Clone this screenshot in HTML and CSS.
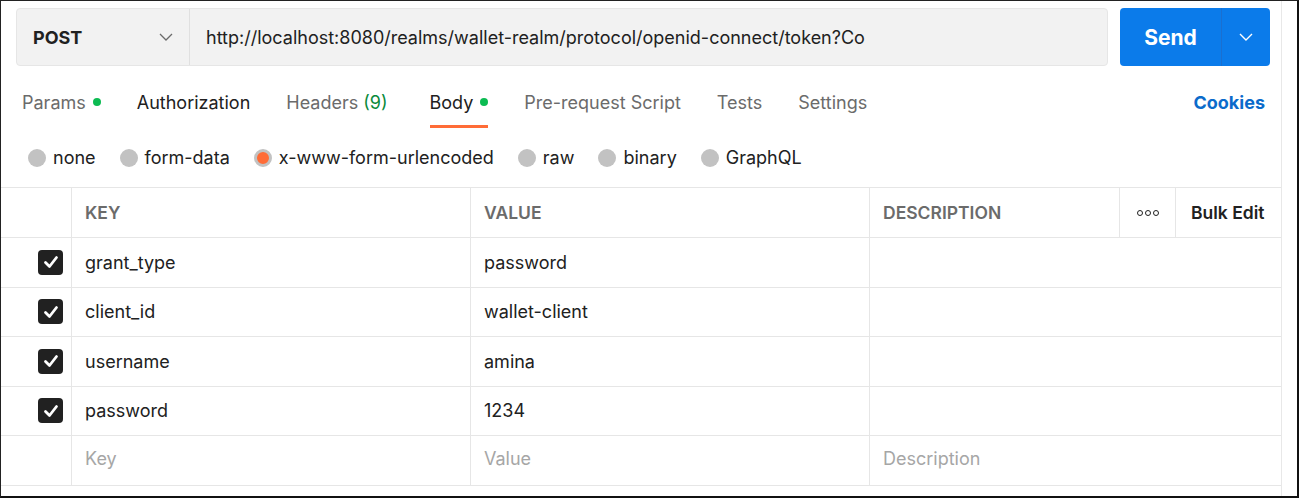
FILE: index.html
```html
<!DOCTYPE html>
<html>
<head>
<meta charset="utf-8">
<link rel="stylesheet" href="styles.css">
</head>
<body>
<div class="frame">
  <div class="main">
    <div class="topbar">
      <div class="urlbox">
        <div class="method">
          <span>POST</span>
          <svg class="chev" width="14" height="8" viewBox="0 0 14 8"><path d="M1 1l6 6 6-6" fill="none" stroke="#6b6b6b" stroke-width="1.3"/></svg>
        </div>
        <div class="url">http://localhost:8080/realms/wallet-realm/protocol/openid-connect/token?Co</div>
      </div>
      <div class="send">
        <div class="send-label">Send</div>
        <div class="send-drop">
          <svg width="14" height="8" viewBox="0 0 14 8"><path d="M1 1l6 6 6-6" fill="none" stroke="#fff" stroke-width="1.4"/></svg>
        </div>
      </div>
    </div>

    <div class="tabs">
      <div class="tab">Params <span class="dot"></span></div>
      <div class="tab dark">Authorization</div>
      <div class="tab">Headers <span class="count">(9)</span></div>
      <div class="tab active">Body <span class="dot"></span></div>
      <div class="tab">Pre-request Script</div>
      <div class="tab">Tests</div>
      <div class="tab">Settings</div>
      <div class="spacer"></div>
      <div class="cookies">Cookies</div>
    </div>

    <div class="radios">
      <div class="radio"><span class="circle"></span>none</div>
      <div class="radio"><span class="circle"></span>form-data</div>
      <div class="radio"><span class="circle on"></span>x-www-form-urlencoded</div>
      <div class="radio"><span class="circle"></span>raw</div>
      <div class="radio"><span class="circle"></span>binary</div>
      <div class="radio"><span class="circle"></span>GraphQL</div>
    </div>

    <div class="table">
      <div class="row head">
        <div class="c chk"></div>
        <div class="c key">KEY</div>
        <div class="c val">VALUE</div>
        <div class="c desc">DESCRIPTION</div>
        <div class="c more"><span class="o"></span><span class="o"></span><span class="o"></span></div>
        <div class="c bulk">Bulk Edit</div>
      </div>
      <div class="row">
        <div class="c chk"><span class="box"><svg width="16" height="14" viewBox="0 0 16 14"><path d="M2.5 7.5l4 4 7-9" fill="none" stroke="#fff" stroke-width="2.8" stroke-linecap="round" stroke-linejoin="round"/></svg></span></div>
        <div class="c key">grant_type</div>
        <div class="c val">password</div>
        <div class="c desc wide"></div>
      </div>
      <div class="row">
        <div class="c chk"><span class="box"><svg width="16" height="14" viewBox="0 0 16 14"><path d="M2.5 7.5l4 4 7-9" fill="none" stroke="#fff" stroke-width="2.8" stroke-linecap="round" stroke-linejoin="round"/></svg></span></div>
        <div class="c key">client_id</div>
        <div class="c val">wallet-client</div>
        <div class="c desc wide"></div>
      </div>
      <div class="row">
        <div class="c chk"><span class="box"><svg width="16" height="14" viewBox="0 0 16 14"><path d="M2.5 7.5l4 4 7-9" fill="none" stroke="#fff" stroke-width="2.8" stroke-linecap="round" stroke-linejoin="round"/></svg></span></div>
        <div class="c key">username</div>
        <div class="c val">amina</div>
        <div class="c desc wide"></div>
      </div>
      <div class="row">
        <div class="c chk"><span class="box"><svg width="16" height="14" viewBox="0 0 16 14"><path d="M2.5 7.5l4 4 7-9" fill="none" stroke="#fff" stroke-width="2.8" stroke-linecap="round" stroke-linejoin="round"/></svg></span></div>
        <div class="c key">password</div>
        <div class="c val">1234</div>
        <div class="c desc wide"></div>
      </div>
      <div class="row placeholder">
        <div class="c chk"></div>
        <div class="c key">Key</div>
        <div class="c val">Value</div>
        <div class="c desc wide">Description</div>
      </div>
    </div>
  </div>
  <div class="side"></div>
</div>
</body>
</html>
```

FILE: styles.css
```css
* { box-sizing: border-box; }
html, body { margin: 0; padding: 0; background: #fff; }
body { font-family: Inter, "Noto Sans", sans-serif; color: #212121; }

.frame {
  width: 1299px;
  height: 498px;
  border-top: 1px solid #222;
  border-left: 1px solid #222;
  border-right: 2px solid #111;
  border-bottom: 2px solid #111;
  display: flex;
  overflow: hidden;
}

.main {
  width: 1281px;
  border-right: 1px solid #e8e8e8;
  display: flex;
  flex-direction: column;
}
.side { flex: 1; }

.topbar {
  display: flex;
  gap: 12px;
  padding: 7px 0 0 15px;
  height: 65px;
}
.urlbox {
  width: 1092px;
  height: 58px;
  background: #f2f2f2;
  border: 1px solid #e6e6e6;
  border-radius: 4px;
  display: flex;
  align-items: center;
}
.method {
  width: 173px;
  height: 100%;
  border-right: 1px solid #e0e0e0;
  display: flex;
  align-items: center;
  justify-content: space-between;
  padding: 0 16px 0 16px;
  font-weight: 700;
  font-size: 18px;
  color: #212121;
}
.url {
  padding-left: 16px;
  font-size: 18px;
  color: #212121;
  white-space: nowrap;
}
.send {
  width: 150px;
  height: 58px;
  background: #0b7bea;
  border-radius: 4px;
  display: flex;
  color: #fff;
}
.send-label {
  width: 102px;
  display: flex;
  align-items: center;
  justify-content: center;
  font-weight: 700;
  font-size: 21px;
  border-right: 1px solid #1a6fd0;
}
.send-drop {
  flex: 1;
  display: flex;
  align-items: center;
  justify-content: center;
}

.tabs {
  height: 62px;
  display: flex;
  align-items: stretch;
  padding: 0 16px 0 21px;
  gap: 36px;
  font-size: 18px;
}
.tab {
  display: flex;
  align-items: center;
  color: #6b6b6b;
  padding-top: 13px;
  border-bottom: 3px solid transparent;
  white-space: nowrap;
}
.tab.dark { color: #212121; }
.tab.active { color: #212121; border-bottom-color: #ff6c37; margin-left: 6px; }
.dot {
  display: inline-block;
  width: 8px;
  height: 8px;
  border-radius: 50%;
  background: #0cbb52;
  margin-left: 7px;
}
.count { color: #0a8a3c; margin-left: 5px; }
.spacer { flex: 1; }
.cookies {
  display: flex;
  align-items: center;
  padding-top: 13px;
  padding-bottom: 3px;
  color: #0b6bcb;
  font-weight: 700;
}

.radios {
  height: 59px;
  display: flex;
  align-items: center;
  padding-left: 27px;
  gap: 24px;
  font-size: 18px;
  color: #212121;
}
.radio { display: flex; align-items: center; white-space: nowrap; }
.circle {
  width: 18px;
  height: 18px;
  border-radius: 50%;
  background: #c2c2c2;
  margin-right: 7px;
}
.circle.on {
  background: #ff6c37;
  border: 3px solid #c2c2c2;
}

.table {
  border-top: 1px solid #e6e6e6;
  font-size: 18px;
}
.row {
  display: flex;
  height: 49.5px;
  border-bottom: 1px solid #e6e6e6;
}
.row.head { height: 50px; font-weight: 600; color: #6b6b6b; font-size: 17.5px; }
.c {
  display: flex;
  align-items: center;
  border-right: 1px solid #e6e6e6;
  padding-left: 13px;
  white-space: nowrap;
}
.chk { width: 71px; padding-left: 37px; }
.key { width: 399px; }
.val { width: 399px; }
.desc { width: 250px; }
.desc.wide { flex: 1; border-right: none; }
.more { width: 56px; justify-content: center; padding-left: 0; gap: 2px; }
.o {
  width: 6px;
  height: 6px;
  border: 1.5px solid #212121;
  border-radius: 50%;
}
.bulk { flex: 1; border-right: none; color: #212121; padding-left: 15px; }
.box {
  width: 25px;
  height: 25px;
  border-radius: 4px;
  background: #212121;
  display: flex;
  align-items: center;
  justify-content: center;
}
.placeholder { color: #a6a6a6; }
.placeholder .c { padding-bottom: 4px; }
```
